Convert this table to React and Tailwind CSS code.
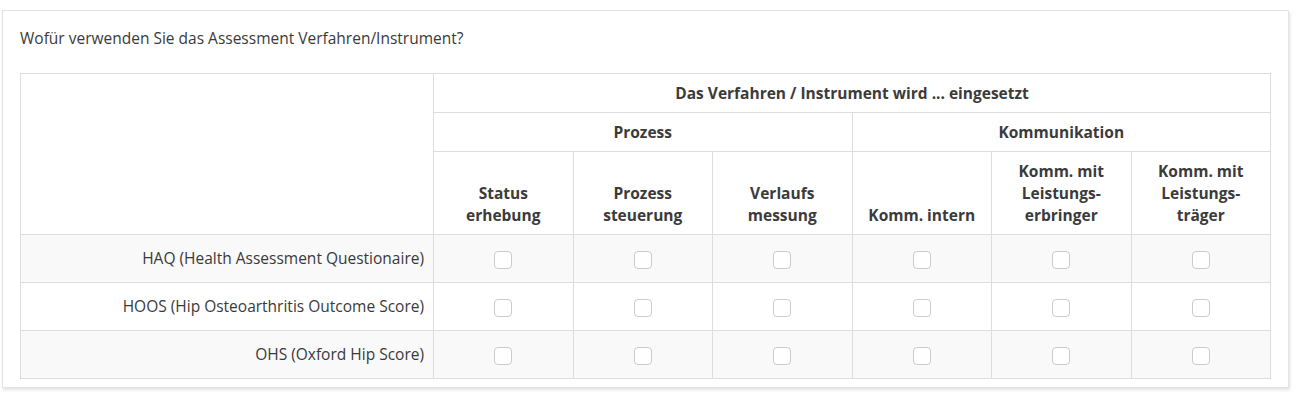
import React from "react";

const columns = [
  ["Status", "erhebung"],
  ["Prozess", "steuerung"],
  ["Verlaufs", "messung"],
  ["Komm. intern"],
  ["Komm. mit", "Leistungs-", "erbringer"],
  ["Komm. mit", "Leistungs-", "träger"],
];

const instruments = [
  "HAQ (Health Assessment Questionaire)",
  "HOOS (Hip Osteoarthritis Outcome Score)",
  "OHS (Oxford Hip Score)",
];

const th = "border border-[#dddddd] px-2 py-2 text-center font-bold text-[15.5px] leading-[22px] text-[#3b3b3b]";

const Checkbox = () => (
  <span className="inline-block h-[18px] w-[18px] rounded-[4px] border border-[#cccccc] bg-white align-middle" />
);

export default function App() {
  return (
    <div className="bg-white pl-[2px] pr-[11px] pt-[10px] pb-[9px] font-['Open_Sans',sans-serif]">
      <div className="border border-[#e3e3e3] bg-white px-[17px] pt-[17px] pb-[8px] shadow-[1px_2px_3px_rgba(0,0,0,0.12)]">
        <p className="text-[15.5px] leading-[20px] text-[#3a3a3a]">
          Wofür verwenden Sie das Assessment Verfahren/Instrument?
        </p>
        <table className="mt-[25px] w-[1250px] table-fixed border-collapse">
          <colgroup>
            <col className="w-[413px]" />
            {columns.map((_, i) => (
              <col key={i} className="w-[139.5px]" />
            ))}
          </colgroup>
          <thead>
            <tr className="h-[39px]">
              <th rowSpan={3} className="border border-[#dddddd]" />
              <th colSpan={6} className={th}>
                Das Verfahren / Instrument wird ... eingesetzt
              </th>
            </tr>
            <tr className="h-[39px]">
              <th colSpan={3} className={th}>
                Prozess
              </th>
              <th colSpan={3} className={th}>
                Kommunikation
              </th>
            </tr>
            <tr className="h-[83px]">
              {columns.map((lines, i) => (
                <th key={i} className={`${th} align-bottom`}>
                  {lines.map((l, j) => (
                    <div key={j}>{l}</div>
                  ))}
                </th>
              ))}
            </tr>
          </thead>
          <tbody>
            {instruments.map((name, r) => (
              <tr key={name} className={`h-[48px] ${r % 2 === 0 ? "bg-[#f9f9f9]" : "bg-white"}`}>
                <td className="border border-[#dddddd] px-[9px] text-right text-[15.5px] text-[#3a3a3a] align-middle">
                  {name}
                </td>
                {columns.map((_, i) => (
                  <td key={i} className="border border-[#dddddd] text-center align-middle">
                    <Checkbox />
                  </td>
                ))}
              </tr>
            ))}
          </tbody>
        </table>
      </div>
    </div>
  );
}
